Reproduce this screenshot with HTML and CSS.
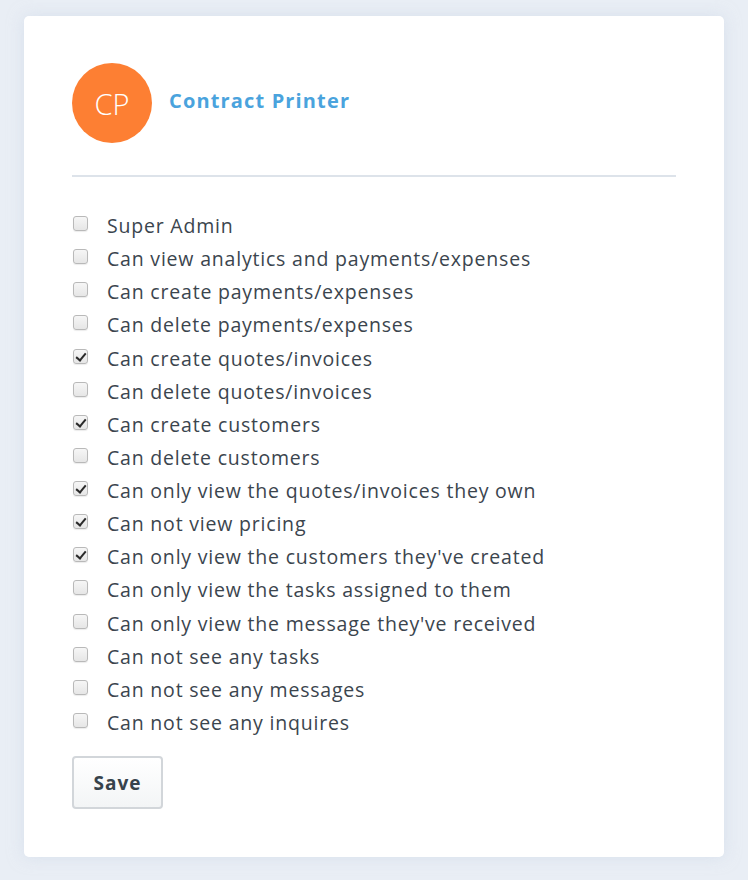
FILE: index.html
```html
<!DOCTYPE html>
<html>
<head>
<meta charset="utf-8">
<link rel="stylesheet" href="styles.css">
</head>
<body>
<div class="card">
  <div class="header">
    <div class="avatar">CP</div>
    <div class="name">Contract Printer</div>
  </div>
  <div class="divider"></div>
  <ul class="perms">
    <li><label><input type="checkbox"><span>Super Admin</span></label></li>
    <li><label><input type="checkbox"><span>Can view analytics and payments/expenses</span></label></li>
    <li><label><input type="checkbox"><span>Can create payments/expenses</span></label></li>
    <li><label><input type="checkbox"><span>Can delete payments/expenses</span></label></li>
    <li><label><input type="checkbox" checked><span>Can create quotes/invoices</span></label></li>
    <li><label><input type="checkbox"><span>Can delete quotes/invoices</span></label></li>
    <li><label><input type="checkbox" checked><span>Can create customers</span></label></li>
    <li><label><input type="checkbox"><span>Can delete customers</span></label></li>
    <li><label><input type="checkbox" checked><span>Can only view the quotes/invoices they own</span></label></li>
    <li><label><input type="checkbox" checked><span>Can not view pricing</span></label></li>
    <li><label><input type="checkbox" checked><span>Can only view the customers they've created</span></label></li>
    <li><label><input type="checkbox"><span>Can only view the tasks assigned to them</span></label></li>
    <li><label><input type="checkbox"><span>Can only view the message they've received</span></label></li>
    <li><label><input type="checkbox"><span>Can not see any tasks</span></label></li>
    <li><label><input type="checkbox"><span>Can not see any messages</span></label></li>
    <li><label><input type="checkbox"><span>Can not see any inquires</span></label></li>
  </ul>
  <button class="save">Save</button>
</div>
</body>
</html>
```
FILE: styles.css
```css
html, body {
  margin: 0;
  padding: 0;
}
body {
  background: #e9eef5;
  font-family: "Open Sans", Lato, sans-serif;
  color: #3b454e;
  padding: 16px 24px 23px 24px;
  height: 880px;
  box-sizing: border-box;
}
.card {
  background: #fff;
  width: 700px;
  box-sizing: border-box;
  padding: 47px 48px 48px 48px;
  border-radius: 5px;
  box-shadow: 0 0 16px rgba(200, 212, 228, 0.55);
}
.header {
  display: flex;
  align-items: center;
  gap: 17px;
}
.avatar {
  width: 80px;
  height: 80px;
  border-radius: 50%;
  background: #fd7f33;
  color: #fff;
  display: flex;
  align-items: center;
  justify-content: center;
  font-size: 29px;
  font-weight: 300;
}
.name {
  color: #4aa3dd;
  font-size: 20px;
  font-weight: 700;
  letter-spacing: 1.15px;
  margin-top: -5px;
}
.divider {
  height: 2px;
  background: #dde3ea;
  margin: 32px 0 31px 0;
}
.perms {
  list-style: none;
  margin: 0;
  padding: 0;
}
.perms li {
  height: 33.13px;
  display: flex;
  align-items: center;
}
.perms label {
  display: flex;
  align-items: center;
  gap: 19px;
  font-size: 19.5px;
  letter-spacing: 0.8px;
}
.perms label span {
  position: relative;
  top: 1px;
}
.perms input {
  appearance: none;
  -webkit-appearance: none;
  margin: 0 0 0 1px;
  width: 15px;
  height: 15px;
  border: 1px solid #b9b9b9;
  border-radius: 3px;
  background: linear-gradient(#f6f6f6, #e6e6e6);
  box-shadow: 0 1px 1px rgba(0,0,0,0.08);
  position: relative;
  top: -1px;
}
.perms input:checked::after {
  content: "";
  position: absolute;
  left: 4px;
  top: 1px;
  width: 4px;
  height: 8px;
  border: solid #2a2a2a;
  border-width: 0 2.5px 2.5px 0;
  transform: rotate(40deg);
}
.save {
  margin-top: 18px;
  width: 91px;
  height: 53px;
  border: 2px solid #d2d6da;
  border-radius: 4px;
  background: linear-gradient(#ffffff, #f3f5f6);
  font-family: "Open Sans", Lato, sans-serif;
  font-size: 19px;
  font-weight: 700;
  letter-spacing: 1px;
  color: #37434c;
}
```
